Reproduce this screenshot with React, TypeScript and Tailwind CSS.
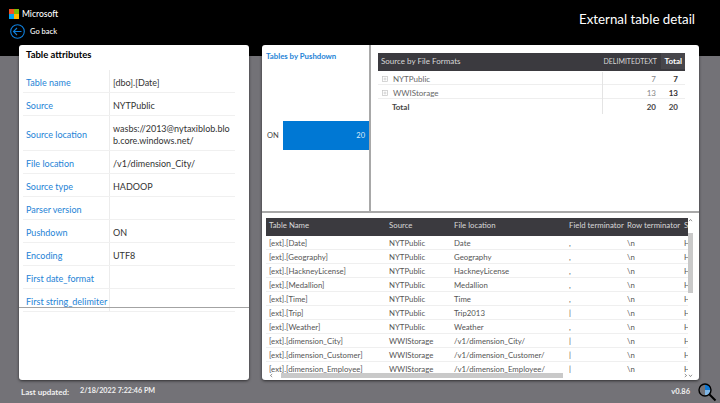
const font = { fontFamily: 'Lato, "Noto Sans", sans-serif' };

const attributes: { label: string; value?: string; tall?: boolean }[] = [
  { label: "Table name", value: "[dbo].[Date]" },
  { label: "Source", value: "NYTPublic" },
  { label: "Source location", value: "wasbs://2013@nytaxiblob.blob.core.windows.net/", tall: true },
  { label: "File location", value: "/v1/dimension_City/" },
  { label: "Source type", value: "HADOOP" },
  { label: "Parser version" },
  { label: "Pushdown", value: "ON" },
  { label: "Encoding", value: "UTF8" },
  { label: "First date_format" },
  { label: "First string_delimiter" },
];

const tables = [
  ["[ext].[Date]", "NYTPublic", "Date", ",", "\\n"],
  ["[ext].[Geography]", "NYTPublic", "Geography", ",", "\\n"],
  ["[ext].[HackneyLicense]", "NYTPublic", "HackneyLicense", ",", "\\n"],
  ["[ext].[Medallion]", "NYTPublic", "Medallion", ",", "\\n"],
  ["[ext].[Time]", "NYTPublic", "Time", ",", "\\n"],
  ["[ext].[Trip]", "NYTPublic", "Trip2013", "|", "\\n"],
  ["[ext].[Weather]", "NYTPublic", "Weather", ",", "\\n"],
  ["[ext].[dimension_City]", "WWIStorage", "/v1/dimension_City/", "|", "\\n"],
  ["[ext].[dimension_Customer]", "WWIStorage", "/v1/dimension_Customer/", "|", "\\n"],
  ["[ext].[dimension_Employee]", "WWIStorage", "/v1/dimension_Employee/", "|", "\\n"],
];

function MicrosoftLogo() {
  return (
    <div className="grid h-[10px] w-[10px] grid-cols-2 gap-[0.5px]">
      <span className="bg-[#f25022]" />
      <span className="bg-[#7fba00]" />
      <span className="bg-[#00a4ef]" />
      <span className="bg-[#ffb900]" />
    </div>
  );
}

function BackIcon() {
  return (
    <svg width="15" height="15" viewBox="0 0 15 15" fill="none" stroke="#0f7fdc" strokeWidth="1.1">
      <circle cx="7.5" cy="7.5" r="6.8" />
      <path d="M11.5 7.5H3.6M7 4L3.5 7.5L7 11" />
    </svg>
  );
}

function SearchIcon() {
  return (
    <svg width="20" height="20" viewBox="0 0 20 20" fill="none">
      <path d="M8 2.5a5.5 5.5 0 0 1 5.5 5.5H8z" fill="#0f78d4" />
      <path d="M8 8h5.5a5.5 5.5 0 0 1-5.5 5.5z" fill="#7fb6e6" />
      <circle cx="8" cy="8" r="6" stroke="#000" strokeWidth="1.4" />
      <path d="M12.5 12.5L18.5 18.5" stroke="#000" strokeWidth="2" />
    </svg>
  );
}

function ExpandBox() {
  return (
    <svg width="6" height="6" viewBox="0 0 6 6" fill="none" stroke="#c4c4c4" strokeWidth="0.7">
      <rect x="0.5" y="0.5" width="5" height="5" />
      <path d="M1.5 3H4.5M3 1.5V4.5" />
    </svg>
  );
}

function Chevron({ d }: { d: string }) {
  return (
    <svg width="5" height="5" viewBox="0 0 5 5" fill="none" stroke="#666" strokeWidth="0.7">
      <path d={d} />
    </svg>
  );
}

function Attributes() {
  return (
    <section className="relative flex w-[230px] flex-col overflow-hidden rounded-[3px] bg-white shadow-[0_1px_3px_rgba(0,0,0,0.6)]">
      <h2 className="pl-[7px] pt-[3px] text-[9.5px] font-bold leading-[14px] text-black">Table attributes</h2>
      <div className="ml-[4px] mt-[8px] w-[212px]">
        {attributes.map((row) => (
          <div
            key={row.label}
            className={`flex items-center border-b border-[#f0f0f0] text-[9px] ${row.tall ? "h-[35px]" : "h-[23px]"}`}
          >
            <div className="flex h-full w-[87px] items-center whitespace-nowrap border-r border-[#ececec] pl-[3px] pt-[3px] text-[#2583d6]">
              {row.label}
            </div>
            <div className="w-[122px] break-all pl-[3px] pt-[3px] leading-[12px] text-[#333]">{row.value}</div>
          </div>
        ))}
      </div>
      <div className="absolute inset-x-0 top-[262px] h-[1px] bg-[#a3a3a3]" />
    </section>
  );
}

function Matrix() {
  return (
    <div className="ml-[7px] mt-[8px] w-[307px] text-[8px]">
      <div className="flex h-[18px] items-center justify-between bg-[#3b3a3f] pb-[2px] pl-[3px] text-[#d8d8d8]">
        <span>Source by File Formats</span>
        <div className="flex h-full items-center">
          <span className="pr-[4px] text-[7px]">DELIMITEDTEXT</span>
          <span className="flex h-full w-[24px] items-center justify-end bg-[#47464b] pr-[3px] font-bold text-white">Total</span>
        </div>
      </div>
      {[
        { name: "NYTPublic", a: "7", b: "7" },
        { name: "WWIStorage", a: "13", b: "13" },
      ].map((row) => (
        <div key={row.name} className="flex h-[14px] items-center border-b border-[#eeeeee] pt-[2px] text-[#666]">
          <div className="flex w-[225px] items-center gap-[5px] border-r border-[#e4e4e4] pl-[4px] leading-[14px]">
            <ExpandBox />
            <span>{row.name}</span>
          </div>
          <span className="w-[54px] pr-[1px] text-right text-[#888]">{row.a}</span>
          <span className="w-[24px] pr-[3px] text-right font-bold text-[#333]">{row.b}</span>
        </div>
      ))}
      <div className="flex h-[14px] items-center pt-[2px] font-bold text-[#444]">
        <div className="w-[225px] border-r border-[#e4e4e4] pl-[14px] leading-[14px]">Total</div>
        <span className="w-[54px] pr-[1px] text-right">20</span>
        <span className="w-[24px] pr-[3px] text-right">20</span>
      </div>
    </div>
  );
}

function DetailTable() {
  return (
    <div className="relative h-[167px] w-full overflow-hidden pl-[4px] pt-[5px]">
      <div className="w-[422px] overflow-hidden text-[7.8px]">
        <div className="flex h-[18px] items-center whitespace-nowrap bg-[#3b3a3f] pb-[2px] text-[#d8d8d8]">
          <span className="w-[120px] shrink-0 pl-[3px]">Table Name</span>
          <span className="w-[65px] shrink-0 pl-[3px]">Source</span>
          <span className="w-[115px] shrink-0 pl-[3px]">File location</span>
          <span className="w-[59px] shrink-0 pl-[3px]">Field terminator</span>
          <span className="w-[58px] shrink-0 pl-[2px]">Row terminator</span>
          <span className="shrink-0 pl-[1px]">S</span>
        </div>
        {tables.map((row) => (
          <div key={row[0]} className="flex h-[14px] items-center whitespace-nowrap border-b border-[#efefef] pt-[3px] text-[#555]">
            <span className="w-[120px] shrink-0 pl-[3px]">{row[0]}</span>
            <span className="w-[65px] shrink-0 pl-[3px]">{row[1]}</span>
            <span className="w-[115px] shrink-0 pl-[3px]">{row[2]}</span>
            <span className="w-[59px] shrink-0 pl-[3px]">{row[3]}</span>
            <span className="w-[58px] shrink-0 pl-[2px]">{row[4]}</span>
            <span className="shrink-0 pl-[1px]">H</span>
          </div>
        ))}
      </div>
      {/* fake scrollbars */}
      <div className="absolute bottom-[2px] left-[4px] flex h-[5px] w-[422px] items-center justify-between bg-white pl-[3px]">
        <Chevron d="M3.2 1L1.4 2.5L3.2 4" />
        <div className="absolute left-[15px] top-0 h-full w-[282px] bg-[#c9c9c9]" />
        <Chevron d="M1.8 1L3.6 2.5L1.8 4" />
      </div>
      <div className="absolute right-[6px] top-[5px] flex h-[160px] w-[5px] flex-col justify-between bg-white">
        <Chevron d="M1 3.2L2.5 1.4L4 3.2" />
        <div className="absolute left-0 top-[15px] h-[60px] w-full bg-[#c9c9c9]" />
        <Chevron d="M1 1.8L2.5 3.6L4 1.8" />
      </div>
    </div>
  );
}

export default function App() {
  return (
    <div className="flex h-[403px] w-[720px] flex-col overflow-hidden bg-[#737277]" style={font}>
      <header className="flex h-[56px] shrink-0 justify-between bg-black text-white">
        <div className="pl-[9px] pt-[9px]">
          <div className="flex items-center gap-[3px]">
            <MicrosoftLogo />
            <span className="text-[8.5px] font-medium leading-[10px]">Microsoft</span>
          </div>
          <div className="mt-[5px] flex items-center gap-[5px] pl-[1px]">
            <BackIcon />
            <span className="text-[7.5px] font-medium">Go back</span>
          </div>
        </div>
        <h1 className="pr-[25px] pt-[9px] text-[13.3px] leading-[20px]">External table detail</h1>
      </header>

      <main className="-mt-[11px] flex h-[335px] shrink-0 gap-[13px] pl-[19px]">
        <Attributes />
        <section className="flex w-[437px] flex-col overflow-hidden rounded-[3px] bg-white shadow-[0_1px_3px_rgba(0,0,0,0.6)]">
          <div className="flex h-[168px] shrink-0 border-b-2 border-[#a8a8a8]">
            <div className="flex w-[109px] shrink-0 flex-col border-r-2 border-[#a8a8a8]">
              <h3 className="pl-[4px] pt-[5px] text-[7.8px] font-bold leading-[12px] text-[#2583d6]">Tables by Pushdown</h3>
              <div className="mt-[59px] flex h-[29px] items-center">
                <span className="w-[21px] pl-[5px] text-[7.5px] text-[#444]">ON</span>
                <div className="flex h-full flex-1 items-center justify-end bg-[#0078d4] pr-[4px] text-[7.5px] text-[#dcecf9]">20</div>
              </div>
            </div>
            <Matrix />
          </div>
          <DetailTable />
        </section>
      </main>

      <footer className="flex flex-1 items-center justify-between pl-[21px] pr-[3px] text-[7.5px] font-bold text-[#f0f0f0]">
        <div className="flex items-center">
          <span className="w-[59px] text-[8px]">Last updated:</span>
          <span className="text-[7.2px]">2/18/2022 7:22:46 PM</span>
        </div>
        <div className="flex items-center gap-[7px]">
          <span>v0.86</span>
          <SearchIcon />
        </div>
      </footer>
    </div>
  );
}
